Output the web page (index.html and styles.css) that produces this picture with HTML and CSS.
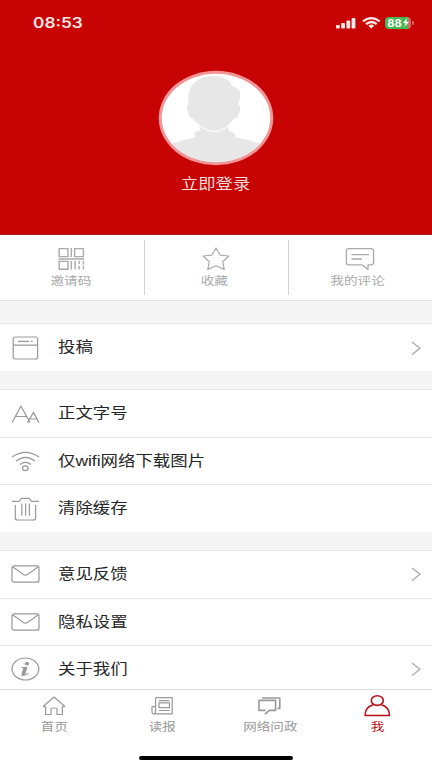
FILE: index.html
```html
<!DOCTYPE html>
<html lang="zh-CN">
<head>
<meta charset="utf-8">
<title>我</title>
<link rel="stylesheet" href="styles.css">
</head>
<body>
<div class="app">
  <header class="hero">
    <div class="status">
      <span class="time">08:53</span>
      <div class="indicators">
        <svg width="20" height="12" viewBox="0 0 20 12" fill="#ffe9e7"><rect x="0" y="8" width="3.8" height="3.6" rx="1"/><rect x="5.2" y="6" width="3.8" height="5.6" rx="1"/><rect x="10.4" y="3.6" width="3.8" height="8" rx="1"/><rect x="15.6" y="1" width="3.8" height="10.6" rx="1"/></svg>
        <svg width="19" height="12" viewBox="0 0 19 12" fill="none" stroke="#ffe9e7" stroke-width="2.3"><path d="M1 4.3Q9.3-2 17.7 4.3M4 7.2Q9.3 2.8 14.7 7.2"/><path d="M6.4 8.7Q9.3 6.5 12.2 8.7L9.3 11.4Z" fill="#ffe9e7" stroke="none"/></svg>
        <div class="battery"><span>88</span><svg width="6" height="9" viewBox="0 0 6 9"><path d="M4 0L0 5h2.5L1.5 9 6 3.7H3.3Z" fill="#fff"/></svg></div>
      </div>
    </div>
    <svg class="avatar" width="116" height="96" viewBox="0 0 116 96">
      <defs><clipPath id="face"><ellipse cx="58" cy="48" rx="54.3" ry="44.2"/></clipPath></defs>
      <ellipse cx="58" cy="48" rx="57.3" ry="47.2" fill="#f19496"/>
      <g clip-path="url(#face)">
        <rect width="116" height="96" fill="#fff"/>
        <path d="M0 80L15.7 73.3Q26 69.5 37.3 67.2Q35.5 62 38 61.4Q42 61 42 59.3L41.3 55.7Q57 68 70 55.7L70.7 60Q71 61.5 74 61.7Q77 62.5 77.3 67.2Q90 69.5 100.7 73.3L116 80V96H0Z" fill="#e7e7e7"/>
        <path d="M30.7 34.5C28 16 39 6 55 6C65 6 71 9 74 16Q83 18 82.3 26Q81.5 31 79.7 34C84 35 82 44 79 47.5Q76.5 48 75.3 49C71 57 62 61 56.3 61C49 61 38 53 34 48Q31 47.5 30 43Q27 35 30.7 34.5Z" fill="#e7e7e7" stroke="#fff" stroke-width="1.8" paint-order="stroke"/>
      </g>
    </svg>
    <span class="login wide">立即登录</span>
  </header>
  <section class="shortcuts">
    <a class="shortcut">
      <svg width="30" height="24" viewBox="0 0 30 24" fill="none" stroke="#aaa" stroke-width="1.4"><path d="M2.2 1.6h8.8v8H2.2zM17.6 1.6h8.8v8h-8.8zM2.2 14.4h8.8v7.8H2.2zM14.3 1v9M1.5 12h25.6M14.3 14v8.6M18.1 14v8.6M22.2 14v3M22.2 19v3.6M26.4 14v3.8M26.4 19v3.6"/></svg>
      <span class="wide">邀请码</span>
    </a>
    <a class="shortcut middle">
      <svg width="30" height="24" viewBox="0 0 30 24" fill="none" stroke="#aaa" stroke-width="1.2" stroke-linejoin="round"><path d="M15 1L19.2 8.2L28 9L21.7 14.8L23.2 22.4L15 18.8L6.8 22.4L8.3 14.8L2 9L10.8 8.2Z"/></svg>
      <span class="wide">收藏</span>
    </a>
    <a class="shortcut">
      <svg width="30" height="24" viewBox="0 0 30 24" fill="none" stroke="#aaa" stroke-width="1.3" stroke-linejoin="round"><path d="M4 1.6H26Q28.6 1.6 28.6 4V15.4Q28.6 17.8 26 17.8H23V22.4L17 17.8H4Q1.4 17.8 1.4 15.4V4Q1.4 1.6 4 1.6ZM6.5 7.6H24M6.5 12H17"/></svg>
      <span class="wide">我的评论</span>
    </a>
  </section>
  <main class="settings">
    <section class="group first">
      <a class="row"><svg class="icon" width="30" height="30" viewBox="0 0 30 30"><rect x="3.2" y="4" width="24.4" height="22" rx="2"/><path d="M3.2 12.2H27.6M8 8.3H19M21 8.3h1.6"/></svg><span class="wide">投稿</span><svg class="arrow" width="12" height="16" viewBox="0 0 12 16"><path d="M2 2L10 8.2L2 14.5"/></svg></a>
    </section>
    <section class="group second">
      <a class="row"><svg class="icon" width="30" height="30" viewBox="0 0 30 30"><path d="M2 23.6L11 7L20 23.6M5.2 17.5H16.8M17.6 23.6L23.4 13.4L29 23.6M19.6 20H27"/></svg><span class="wide">正文字号</span></a>
      <a class="row"><svg class="icon" width="30" height="30" viewBox="0 0 30 30"><path d="M2 11Q15.5 1.6 29 11M6 15Q15.5 7.7 25 15M10 18.5Q15.5 14.4 21 18.5"/><ellipse cx="15.3" cy="22.2" rx="2.8" ry="2.4"/></svg><span class="wide">仅wifi网络下载图片</span></a>
      <a class="row"><svg class="icon" width="30" height="30" viewBox="0 0 30 30"><path d="M2 7.3H9L11.5 4.4H19L21.5 7.3H29M5.3 11V24Q5.3 26 7.3 26H23.6Q25.6 26 25.6 24V11M11.8 9.4V21.8M15.6 9.4V21.8M19.4 9.4V21.8"/></svg><span class="wide">清除缓存</span></a>
    </section>
    <section class="group third">
      <a class="row"><svg class="icon" width="30" height="30" viewBox="0 0 30 30"><rect x="2" y="6.8" width="27" height="16.4" rx="2"/><path d="M3 7.9L12.8 15.1Q15.5 17.2 18.2 15.1L28 7.9"/></svg><span class="wide">意见反馈</span><svg class="arrow" width="12" height="16" viewBox="0 0 12 16"><path d="M2 2L10 8.2L2 14.5"/></svg></a>
      <a class="row"><svg class="icon" width="30" height="30" viewBox="0 0 30 30"><rect x="2" y="6.8" width="27" height="16.4" rx="2"/><path d="M3 7.9L12.8 15.1Q15.5 17.2 18.2 15.1L28 7.9"/></svg><span class="wide">隐私设置</span></a>
      <a class="row"><svg class="icon" width="30" height="30" viewBox="0 0 30 30"><ellipse cx="15.4" cy="15" rx="13.4" ry="11"/><ellipse class="solid" cx="17" cy="9.7" rx="2.2" ry="1.7"/><path class="solid" d="M11.6 13H17.6L15.2 20.2Q16.8 20 18 18.5L18.7 19Q16.6 22 13.4 22Q10.8 22 11.5 19.8L13.3 14.2L11.3 13.8Z"/></svg><span class="wide">关于我们</span><svg class="arrow" width="12" height="16" viewBox="0 0 12 16"><path d="M2 2L10 8.2L2 14.5"/></svg></a>
    </section>
  </main>
  <nav class="tabs">
    <a class="tab"><svg width="30" height="24" viewBox="0 0 30 24"><path d="M4.3 12.2L15 3L25.7 12.2Q25.6 13 23.4 12.6V20.5H18V15.2Q18 14 15 14T12 15.2V20.5H6.6V12.6Q4.4 13 4.3 12.2Z"/></svg><span class="wide">首页</span></a>
    <a class="tab"><svg width="30" height="24" viewBox="0 0 30 24"><path d="M8.6 3.6H25.2V19.8H6.6Q5 19.8 5 18V12.7H8.6V17.5Q8.6 19.6 6.6 19.8M8.6 3.6V14M12 6.7H22.5M12 8.8H22.5V13.6H12ZM12 16.5H22.5"/></svg><span class="wide">读报</span></a>
    <a class="tab"><svg class="chat" width="30" height="24" viewBox="0 0 30 24"><path d="M9.8 20.2L14.5 16.4H20.6V6.4H4V16.4H10.5M7.2 4H24.8V14.4H22.5"/></svg><span class="wide">网络问政</span></a>
    <a class="tab active"><svg width="30" height="24" viewBox="0 0 30 24"><ellipse cx="14.3" cy="6.6" rx="6" ry="4.8"/><path d="M10.3 10.8Q2.1 13 2.1 21.5H26.5Q26.5 13 18.3 10.8"/></svg><span class="wide">我</span></a>
  </nav>
  <div class="home-bar"></div>
</div>
</body>
</html>
```
FILE: styles.css
```css
* { box-sizing: border-box; }
body {
  margin: 0;
  font-family: "Liberation Sans", "Noto Sans CJK SC", sans-serif;
}
svg { display: block; flex: none; }
.app {
  width: 432px;
  height: 768px;
  display: flex;
  flex-direction: column;
  overflow: hidden;
  background: #fff;
}
/* Labels use an expanded letterform. */
.wide {
  display: inline-block;
  transform: scaleX(1.21);
  white-space: nowrap;
}
.hero {
  height: 235px;
  flex: none;
  background: #c80303;
  display: flex;
  flex-direction: column;
  align-items: center;
  border-bottom: 1px solid #b8191a;
}
.status {
  width: 100%;
  height: 45px;
  padding: 0 18px 0 33px;
  display: flex;
  align-items: center;
  justify-content: space-between;
}
.time {
  color: #ffe9e7;
  font: 600 13.8px/20px Inter, sans-serif;
  transform: scaleX(1.25);
  transform-origin: left;
}
.indicators { display: flex; align-items: center; gap: 6px; }
.battery {
  position: relative;
  width: 26px;
  height: 12px;
  margin: 0 3px 0 -2px;
  border-radius: 4px;
  background: linear-gradient(90deg, #45b955 88%, #dc6967 88%);
  display: flex;
  align-items: center;
  justify-content: center;
  gap: 1px;
  color: #fff;
  font: 700 11px/12px Inter, sans-serif;
}
.battery::after {
  content: "";
  position: absolute;
  right: -3px;
  top: 4px;
  width: 2px;
  height: 4px;
  border-radius: 1px;
  background: #dc6967;
}
.avatar { margin-top: 25px; }
.login {
  margin-top: 8px;
  font-size: 14.3px;
  line-height: 20px;
  color: #fbdcdc;
}
.shortcuts {
  height: 66px;
  flex: none;
  display: grid;
  grid-template-columns: 144px 145px 143px;
  padding: 5px 0;
  border-bottom: 1px solid #e0e0e0;
}
.shortcut {
  display: flex;
  flex-direction: column;
  align-items: center;
  padding: 7px 2px 0 0;
  font-size: 11.3px;
  line-height: 16px;
  color: #aaa;
}
.shortcut:first-child { padding: 7px 0 0; }
.shortcut .wide { margin: 2px 3px 0 0; }
.middle {
  border-left: 1px solid #d3d3d3;
  border-right: 1px solid #d3d3d3;
}
.settings {
  flex: 1;
  background: #f5f5f5;
  display: flex;
  flex-direction: column;
  overflow: hidden;
}
.group {
  flex: none;
  background: #fff;
  border-top: 1px solid #e6e6e6;
}
.first { margin-top: 22px; }
.second, .third { margin-top: 18px; }
.row {
  height: 47.4px;
  display: flex;
  align-items: center;
  padding: 0 10px;
  font-size: 14.4px;
  line-height: 20px;
  color: #262626;
}
.row:first-child { height: 47px; }
.row + .row { border-top: 1px solid #e6e6e6; }
.row .wide { margin: 0 0 0.6px 18px; transform-origin: left; }
.icon { fill: none; stroke: #999; stroke-width: 1.2; stroke-linejoin: round; }
.solid { fill: #999; stroke: none; }
.arrow { margin-left: auto; fill: none; stroke: #aaa; stroke-width: 1.3; }
.tabs {
  height: 51px;
  flex: none;
  display: grid;
  grid-template-columns: repeat(4, 1fr);
  border-top: 1px solid #dedede;
}
.tab {
  display: flex;
  flex-direction: column;
  align-items: center;
  padding-top: 4px;
  font-size: 11.2px;
  line-height: 18px;
  color: #999;
}
.tab svg { fill: none; stroke: #999; stroke-width: 1.2; stroke-linejoin: round; }
.tab .chat { stroke-width: 1.6; }
.tab.active { color: #b51218; }
.tab.active svg { stroke: #b51218; stroke-width: 1.6; }
.home-bar {
  width: 154px;
  height: 4px;
  margin: 16px auto 8px;
  flex: none;
  border-radius: 2px;
  background: #000;
}
```
